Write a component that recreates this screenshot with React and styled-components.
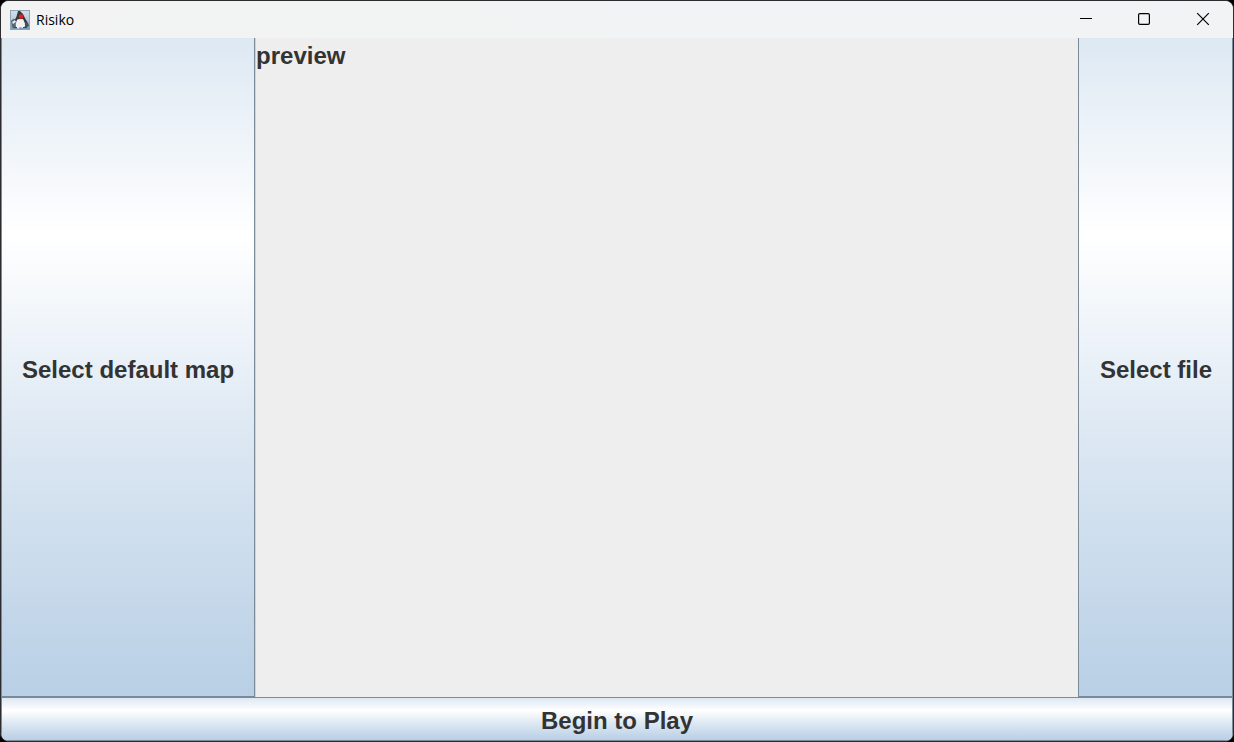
import React from "react";
import styled, { createGlobalStyle } from "styled-components";

const GlobalStyle = createGlobalStyle`
  * { box-sizing: border-box; }
  html, body { margin: 0; background: #000; }
`;

const Window = styled.div`
  display: flex;
  flex-direction: column;
  min-height: 100vh;
  border: 1px solid #2b2b30;
  border-radius: 9px;
  overflow: hidden;
  background: #eeeeee;
`;

const TitleBar = styled.header`
  display: flex;
  align-items: center;
  height: 37px;
  padding-left: 9px;
  background: linear-gradient(90deg, #f3f3f3, #f2f3f5);
  color: #000;
`;

const Title = styled.h1`
  flex: 1;
  margin: 0 0 0 6px;
  font: 400 14px/20px "Open Sans", "Noto Sans", sans-serif;
`;

const Controls = styled.div`
  display: flex;
  height: 100%;
  padding: 0 1px 2px 0;
`;

const WindowControl = styled.button`
  display: flex;
  align-items: center;
  justify-content: center;
  width: 58px;
  height: 100%;
  padding: 0;
  border: 0;
  background: transparent;
  color: #000;
`;

const Content = styled.main`
  flex: 1;
  display: flex;
`;

const MetalButton = styled.button`
  flex: none;
  padding: 9px 20px 5px;
  border: 1px solid #7a8a99;
  border-radius: 0;
  background: linear-gradient(#dde8f3 0%, #ffffff 30%, #dde8f3 60%, #b8cfe5 100%);
  color: #333333;
  font: 700 24px/28px "Liberation Sans", Arial, sans-serif;
  white-space: nowrap;
`;

const SideButton = styled(MetalButton)`
  padding: 6px 20px 0 ${({ $inset }) => $inset}px;
  border-top: 0;
`;

const Preview = styled.section`
  flex: 1;
  padding: 4px 0;
  border-left: 1px solid #c8d6e4;
  background: #eeeeee;
  color: #333333;
  font: 700 24px/28px "Liberation Sans", Arial, sans-serif;
`;

const DukeIcon = () => (
  <svg width="20" height="20" viewBox="0 0 20 20" aria-hidden="true">
    <defs>
      <linearGradient id="tile" x1="0" y1="0" x2="0" y2="1">
        <stop offset="0" stopColor="#d3e0ec" />
        <stop offset="0.5" stopColor="#b9cbd9" />
        <stop offset="1" stopColor="#7295b2" />
      </linearGradient>
    </defs>
    <rect x="0.5" y="0.5" width="19" height="19" fill="url(#tile)" stroke="#8fa6b8" />
    <path d="M1 11 Q3 8 7 9 L7 17 L2 17Z" fill="#596873" />
    <path d="M2 12 L5 10 L6 12 L3 14Z" fill="#e4e9ec" />
    <path d="M14 9 Q18 11 19 16 L15 18Z" fill="#42515c" />
    <path d="M7 10 Q5 14 6 17 L8 19 L10 17 L13 18 L15 16 Q15 13 14 9Z" fill="#f2f2f2" />
    <path d="M8 1 L10 1 Q14 4 15 8 L17 12 L15 13 L13 9 L8 9 L6 11 L5 10 Q7 6 8 1Z" fill="#38393d" />
    <circle cx="11" cy="6.5" r="2.2" fill="#ee1b16" />
    <path d="M3 17.5H7 M13 17.5H17" fill="none" stroke="#3b4c5a" />
  </svg>
);

const MinimizeIcon = () => (
  <svg width="14" height="14" viewBox="0 0 14 14" aria-hidden="true">
    <path d="M0 6.5H12" stroke="currentColor" />
  </svg>
);

const MaximizeIcon = () => (
  <svg width="14" height="14" viewBox="0 0 14 14" aria-hidden="true">
    <rect x="0.6" y="1.6" width="10.8" height="10.8" rx="1.3" fill="none" stroke="currentColor" strokeWidth="1.2" />
  </svg>
);

const CloseIcon = () => (
  <svg width="14" height="14" viewBox="0 0 14 14" aria-hidden="true">
    <path d="M1.2 1.2L12.8 12.8M12.8 1.2L1.2 12.8" stroke="currentColor" strokeWidth="1.2" />
  </svg>
);

export default function App() {
  return (
    <>
      <GlobalStyle />
      <Window>
        <TitleBar>
          <DukeIcon />
          <Title>Risiko</Title>
          <Controls>
            <WindowControl type="button" aria-label="Minimize"><MinimizeIcon /></WindowControl>
            <WindowControl type="button" aria-label="Maximize"><MaximizeIcon /></WindowControl>
            <WindowControl type="button" aria-label="Close"><CloseIcon /></WindowControl>
          </Controls>
        </TitleBar>
        <Content>
          <SideButton type="button" $inset={20}>Select default map</SideButton>
          <Preview>preview</Preview>
          <SideButton type="button" $inset={21}>Select file</SideButton>
        </Content>
        <MetalButton type="button">Begin to Play</MetalButton>
      </Window>
    </>
  );
}
